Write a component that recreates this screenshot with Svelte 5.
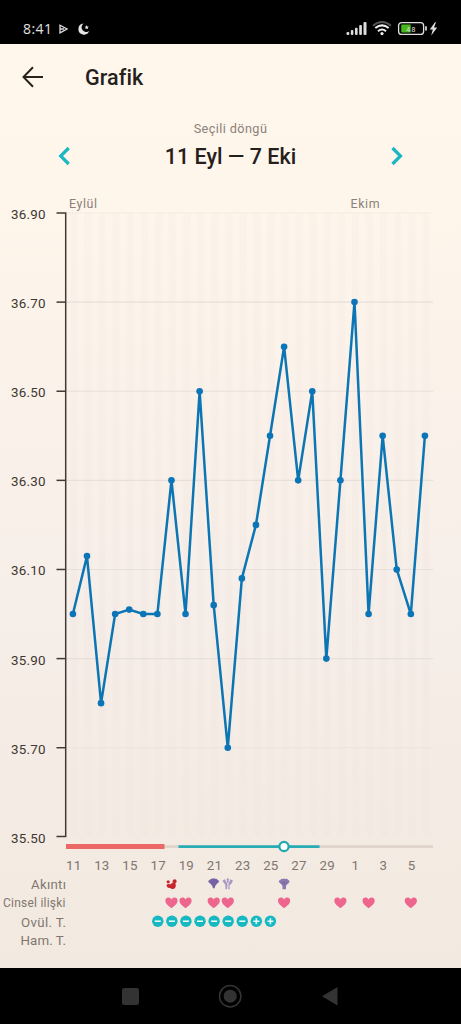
<script>
  const temps = [36.0, 36.13, 35.8, 36.0, 36.01, 36.0, 36.0, 36.3, 36.0, 36.5, 36.02, 35.7, 36.08, 36.2, 36.4, 36.6, 36.3, 36.5, 35.9, 36.3, 36.7, 36.0, 36.4, 36.1, 36.0, 36.4];
  const ticks = [36.9, 36.7, 36.5, 36.3, 36.1, 35.9, 35.7, 35.5];
  const days = [11, 13, 15, 17, 19, 21, 23, 25, 27, 29, 1, 3, 5];
  const hearts = [7, 8, 10, 11, 15, 19, 21, 24];
  const tests = ['-', '-', '-', '-', '-', '-', '-', '+', '+'];
  const rows = [
    { label: 'Akıntı', y: 889, x: 31, w: 35, size: 13.3 },
    { label: 'Cinsel ilişki', y: 906.5, x: 3, w: 62.5, size: 12 },
    { label: 'Ovül. T.', y: 926.5, x: 21, w: 45, size: 13.3 },
    { label: 'Ham. T.', y: 945, x: 20.5, w: 45.5, size: 13.3 }
  ];
  const px = (i) => 72.9 + i * 14.08;
  const py = (t) => 213 + (36.9 - t) * 445.6;
  const line = temps.map((t, i) => `${px(i)},${py(t)}`).join(' ');
</script>

<div class="screen">
  <div class="status">
    <div class="left">
      <span class="time">8:41</span>
      <svg width="9" height="10" viewBox="0 0 9 10"><path d="M1 1.2 8 5 1 8.8V1.2ZM1 5H5" fill="none" stroke="#ddd" stroke-width="1.3" /></svg>
      <svg class="moon" width="12" height="12" viewBox="0 0 12 12"><path d="M5.5.4A5.6 5.6 0 1 0 11.2 8.1 3.7 3.7 0 0 1 5.5.4Z" fill="#e6e6e6" /><path d="m8.7 2.1.6 1.4 1.5.2-1.1 1 .3 1.5-1.3-.8-1.3.8.3-1.5-1.1-1 1.5-.2Z" fill="#e6e6e6" /></svg>
    </div>
    <svg class="indicators" width="94" height="18" viewBox="0 0 94 18">
      <g fill="#ddd"><rect x=".5" y="12" width="2.8" height="3" rx="1" /><rect x="4.8" y="10" width="2.6" height="5" rx="1" /><rect x="9" y="7.7" width="2.6" height="7.3" rx="1" /><rect x="13.2" y="5" width="2.7" height="10" rx="1" /><rect x="17.5" y="2" width="3" height="13" rx="1" /></g>
      <g fill="none" stroke-width="2"><path d="M27 5.7Q36-1.7 45 5.7" stroke="#555" /><path d="M29.3 8.1Q36 2.6 42.7 8.1M32 11.2Q36 7.8 40 11.2" stroke="#eee" /></g>
      <circle cx="36" cy="13.6" r="1.6" fill="#eee" />
      <rect x="52.6" y="2.6" width="25" height="11.8" rx="3" fill="#020402" stroke="#ddd" stroke-width="1.3" />
      <path d="M55.2 5.5q0-1 1-1h8.5v8h-8.5q-1 0-1-1Z" fill="#45b718" />
      <text x="60" y="11.6" class="battery">48</text>
      <path d="M80 6.3v4.2" stroke="#ddd" stroke-width="1.7" />
      <path d="m89 2.2-5.2 7.2h3l-1.6 6 6-7.8h-3.2l2-5.4Z" fill="#e0e0e0" />
    </svg>
  </div>

  <header>
    <svg width="22" height="22" viewBox="0 0 22 22"><path d="M21 11H1.8M11 1.3 1.5 11 11 20.7" fill="none" stroke="#29231d" stroke-width="2" /></svg>
    <h1>Grafik</h1>
  </header>

  <section class="period">
    <svg class="chevron" width="14" height="20" viewBox="0 0 14 20"><path d="M11.7 2 3.7 10l8 8" /></svg>
    <div class="dates">
      <div class="caption">Seçili döngü</div>
      <div class="range">11 Eyl — 7 Eki</div>
    </div>
    <svg class="chevron" width="14" height="20" viewBox="0 0 14 20"><path d="m2.5 2 8 8-8 8" /></svg>
  </section>

  <svg class="chart" width="461" height="778" viewBox="0 190 461 778">
    <defs>
      <path id="heart" d="M0 5.5C-3.7 2.7-6.1.7-6.1-2-6.1-5.7-1.8-6.3 0-3.4 1.8-6.3 6.1-5.7 6.1-2 6.1.7 3.7 2.7 0 5.5Z" fill="#ee658e" />
    </defs>
    {#each temps as _, i}
      <rect x={px(i) - 2.5} y="213" width="7" height="623" class="band" />
    {/each}
    {#each ticks as t, i}
      {#if i < 7}<path d="M66 {py(t)}H433" class="grid" class:faint={i === 0 || i === 6} />{/if}
      <text x="11" y={py(t) + (i === 7 ? 6.3 : 6)} textLength="34.5" class="value">{t.toFixed(2)}</text>
      {#if i > 0 && i < 7}<path d="M56.5 {py(t)}H66" class="axis" />{/if}
    {/each}
    <path d="M56.5 213H65.7V836.5H56.5" class="axis" />
    <text x="69" y="208" textLength="28" class="month">Eylül</text>
    <text x="350.5" y="208" textLength="29" class="month">Ekim</text>

    <polyline points={line} class="line" />
    {#each temps as t, i}<circle cx={px(i)} cy={py(t)} r="3.3" fill="#0b75b7" />{/each}

    <path d="M66 846.6H433" stroke="#dfd3ca" stroke-width="2.6" />
    <path d="M66 846.6H164.5" stroke="#ec6865" stroke-width="5" />
    <path d="M178.5 846.6H319.5" stroke="#27adb3" stroke-width="2.8" />
    <circle cx="284" cy="846.5" r="4.6" fill="#fff" stroke="#20aab1" stroke-width="2.2" />

    {#each days as d, i}<text x={px(i * 2) + 0.8} y="870" text-anchor="middle" class="day">{d}</text>{/each}
    {#each rows as r}<text x={r.x} y={r.y} textLength={r.w} font-size={r.size} class="label">{r.label}</text>{/each}

    <g fill="#c9252c">
      <circle cx="168.2" cy="881.8" r="1.6" /><circle cx="174.6" cy="881.2" r="2" />
      <path d="M166.8 886.3q-.8-2 1.4-2.4 1.9.3 2.6.4 1.2-2.3 3.4-1.7 2 .5 1.6 3.2-.4 3.2-3.2 3.2-1.6.1-2.5-1.1-2.8.3-3.3-1.6Z" />
    </g>
    <path d="M208.2 881.7q.1-1.5 1.6-1.8 1-1.6 2.4-1.1 1.4-1 2.9 0 1.8-.5 2.5 1.1 1.4.2 1.5 1.8-1.6 1.6-3 3-1.2 1.3-1.4 3.4-.9.8-1.8 0-.3-2.2-1.5-3.4-1.5-1.5-3.2-3Z" fill="#7760a4" />
    <g fill="#a897c3">
      <path d="m222.4 880.7 2.4-1.5 2.7 4.9-.5 5.2h-1.5l-.2-4.5ZM226.5 878.6h2.5l-.7 4.4-1-.1ZM230.3 879.2l2.8 1.6-1.8 3-1.7 1.4v4.1h-1.3l.1-5.1Z" />
    </g>
    <path d="M278.7 881.6q0-1.5 1.6-1.7.9-1.6 2.5-1 1.4-1 2.8 0 1.9-.6 2.5 1 1.4.2 1.5 1.8-1.1 1.9-3 3-.9 1.2-.7 4.6h-3.4q.3-3.3-.6-4.6-2.3-1.2-3.2-3.1Z" fill="#8d78b2" />
    <path d="m281.1 881.8 2.4 2.5M284.3 881v3.7M287.5 881.8l-2.4 2.5" stroke="#6b568f" stroke-width=".6" />

    {#each hearts as h}<use href="#heart" x={px(h)} y="902.8" />{/each}
    {#each tests as sign, i}
      <g transform="translate({px(i + 6) + 0.4} 921.2)">
        <circle r="5.7" fill="#16b8c2" />
        <path d={sign === '+' ? 'M-3 0H3M0-3V3' : 'M-3 0H3'} stroke="#e9fbfa" stroke-width="1.6" />
      </g>
    {/each}
  </svg>

  <nav>
    <svg width="461" height="56" viewBox="0 0 461 56">
      <rect x="122" y="20" width="17" height="17" rx="2.3" fill="#333" />
      <circle cx="230.2" cy="28.2" r="10.7" fill="none" stroke="#333" stroke-width="1.5" />
      <circle cx="230.2" cy="28.2" r="6.5" fill="#333" />
      <path d="M337.5 19v18.5L322 28.2Z" fill="#333" />
    </svg>
  </nav>
</div>

<style>
  .screen { display: flex; flex-direction: column; width: 461px; height: 1024px; overflow: hidden; background: linear-gradient(#fff7ec 44px, #fef5eb 210px, #f6eee8 600px, #f2e9e0 968px); font-family: Roboto, sans-serif; color: #25201c; }
  svg { display: block; flex: none; }
  .status { height: 44px; flex: none; box-sizing: border-box; background: #000; display: flex; justify-content: space-between; padding: 20px 19px 0 23px; }
  .left { display: flex; align-items: center; height: 17px; color: #e2e2e2; }
  .time { font: 14px/17px "Open Sans", sans-serif; letter-spacing: .4px; width: 36px; }
  .moon { margin-left: 10px; }
  .indicators { margin-right: 2px; }
  .battery { font-size: 7.5px; letter-spacing: 1px; fill: #ddd; }
  header { height: 66px; flex: none; display: flex; align-items: center; padding-left: 22px; }
  h1 { margin: 2px 0 0 41px; font-size: 21.5px; line-height: 26px; font-weight: 500; letter-spacing: .1px; }
  .period { height: 80px; flex: none; display: flex; justify-content: space-between; padding: 0 57px; }
  .chevron { margin-top: 36px; fill: none; stroke: #1bb7c4; stroke-width: 3.2; }
  .dates { text-align: center; }
  .caption { margin-top: 10px; font-size: 12.7px; line-height: 17px; letter-spacing: .4px; color: #8b817a; }
  .range { margin-top: 7px; font-size: 21.5px; line-height: 26px; font-weight: 500; letter-spacing: 0; white-space: nowrap; }
  .band { fill: #ecdcd3; opacity: .1; }
  .grid { stroke: #e7dfd9; stroke-width: 1.2; }
  .grid.faint { opacity: .4; }
  .axis { fill: none; stroke: #443a35; stroke-width: 1.5; }
  .value { font-size: 13.4px; fill: #403833; }
  .month { font-size: 12.4px; fill: #8b817a; }
  .line { fill: none; stroke: #0c75b4; stroke-width: 2.5; stroke-linejoin: round; }
  .day { font-size: 13.3px; fill: #81766f; letter-spacing: .2px; }
  .label { fill: #82776f; }
  nav { height: 56px; flex: none; background: #000; }
</style>
